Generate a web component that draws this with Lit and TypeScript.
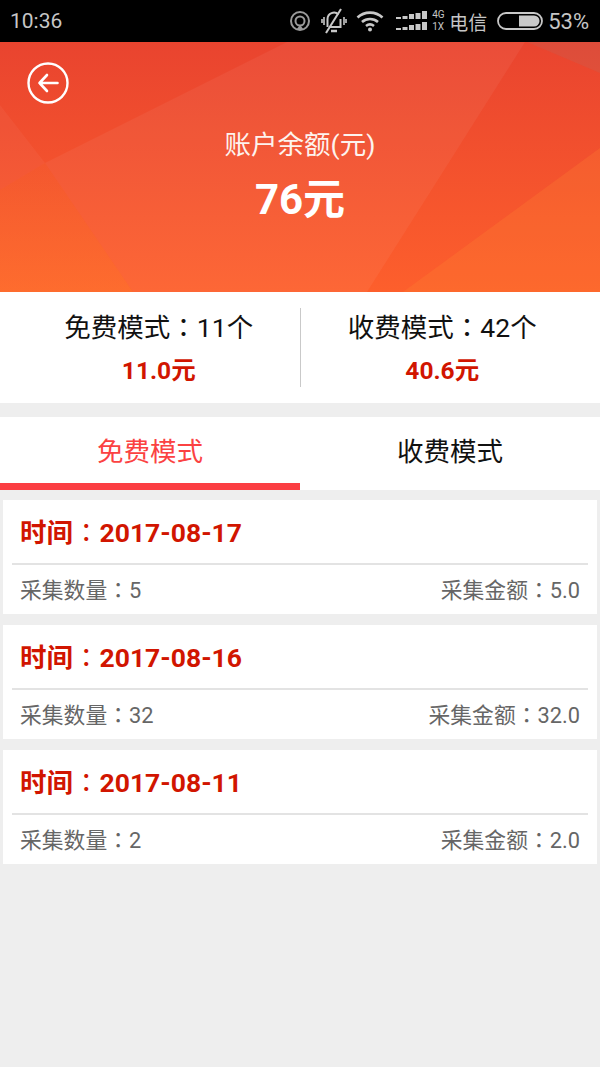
import { LitElement, html, css, svg } from "lit";
import { customElement } from "lit/decorators.js";

const records = [
  { date: "2017-08-17", count: "5", amount: "5.0" },
  { date: "2017-08-16", count: "32", amount: "32.0" },
  { date: "2017-08-11", count: "2", amount: "2.0" },
];

const signalRow = (y: number) =>
  [0, 1, 2, 3, 4].map((i) => {
    const h = [2, 3, 5, 6, 8][i];
    return svg`<rect x=${i * 6.5} y=${y + 8 - h} width="5" height=${h} fill="#c8c8c8"></rect>`;
  });

const colon = html`<span class="colon">：</span>`;

@customElement("app-root")
export class AppRoot extends LitElement {
  static styles = css`
    :host {
      display: block;
      width: 600px;
      height: 1067px;
      background: #eeeeee;
      font-family: Roboto, "Noto Sans CJK SC", sans-serif;
      overflow: hidden;
    }
    .colon { font-family: "Noto Sans CJK TC", sans-serif; font-weight: 400; line-height: 0; }
    .status {
      height: 42px;
      background: #000;
      color: #c6c6c6;
      display: flex;
      align-items: center;
      padding: 0 11px 0 10px;
      box-sizing: border-box;
      font-size: 21px;
    }
    .time { flex: 1; }
    .status-icons { display: flex; align-items: center; }
    .status-icons svg { display: block; flex: none; }
    .gap9 { margin-left: 9px; }
    .gap10 { margin-left: 10px; }
    .gap12 { margin-left: 12px; }
    .net {
      display: flex;
      flex-direction: column;
      font-size: 10px;
      line-height: 12px;
      width: 12px;
      margin: 0 5px 0 4px;
      text-align: center;
    }
    .carrier { font-size: 19px; margin-right: 10px; }
    .pct { margin-left: 5px; font-size: 22px; }
    .hero {
      position: relative;
      height: 250px;
      color: #fff;
      text-align: center;
      overflow: hidden;
    }
    .hero-bg { position: absolute; inset: 0; display: block; }
    .hero-body { position: relative; display: flex; flex-direction: column; align-items: center; padding-top: 85px; }
    .back { position: absolute; left: 27px; top: 20px; display: block; }
    .hero-label { font-size: 26.5px; line-height: 36px; color: #fdf3ee; }
    .hero-value { font-size: 42px; font-weight: 700; line-height: 50px; margin-top: 12px; }
    .stats {
      height: 111px;
      background: #fff;
      display: flex;
      padding: 16px 16px 16px 18px;
      box-sizing: border-box;
    }
    .stat {
      display: flex;
      flex-direction: column;
      align-items: center;
      justify-content: flex-start;
      gap: 6px;
    }
    .stat:first-child { flex: 282; }
    .stat + .stat { flex: 284; border-left: 1px solid #c9c9c9; }
    .stat-name { font-size: 26.5px; line-height: 40px; color: #111; }
    .stat-value { font-size: 24.5px; line-height: 34px; font-weight: 700; color: #d11500; }
    .tabs {
      margin-top: 14px;
      height: 73px;
      background: #fff;
      display: flex;
    }
    .tab {
      flex: 1;
      font-size: 26.5px;
      line-height: 69px;
      text-align: center;
      color: #111;
      box-sizing: border-box;
      height: 73px;
    }
    .tab.on { color: #fb4242; border-bottom: 7px solid #fb3e42; }
    .list {
      padding: 10px 3px 0;
      display: flex;
      flex-direction: column;
      gap: 11px;
    }
    .card { background: #fff; height: 114px; padding: 0 9px; box-sizing: border-box; }
    .card-title {
      line-height: 66px;
      padding: 0 8px;
      font-size: 26.5px;
      font-weight: 700;
      color: #d11500;
      border-bottom: 2px solid #e3e3e3;
      box-sizing: border-box;
      height: 65px;
      white-space: nowrap;
    }
    .card-row {
      display: flex;
      justify-content: space-between;
      padding: 0 8px;
      font-size: 21.8px;
      line-height: 52px;
      height: 49px;
      color: #666;
    }
  `;

  render() {
    return html`
      <div class="status">
        <div class="time">10:36</div>
        <div class="status-icons">
          <svg width="22" height="24" viewBox="0 0 22 24" fill="none" stroke="#9a9a9a" stroke-width="2">
            <circle cx="11" cy="12" r="9"></circle>
            <circle cx="11" cy="12" r="4.5"></circle>
            <path d="M7 21 L11 16 L15 21 Z" fill="#9a9a9a" stroke="none"></path>
          </svg>
          <svg class="gap10" width="26" height="26" viewBox="0 0 26 26" fill="none" stroke="#c8c8c8" stroke-width="2">
            <path d="M6.5 19 V11 a6.5 6.5 0 0 1 11 -4.5 M19.5 11 V19 H9"></path>
            <path d="M10 23 h6" stroke-width="2.5"></path>
            <path d="M20 1 L5 25"></path>
            <path d="M3 9 v8 M1 11 v4 M23 9 v8 M25 11 v4" stroke-width="1.6"></path>
          </svg>
          <svg class="gap9" width="28" height="22" viewBox="0 0 28 22" fill="none" stroke="#c8c8c8" stroke-width="2.6">
            <path d="M1.5 7.5 C8.5 1 19.5 1 26.5 7.5"></path>
            <path d="M6 12 C10.5 8 17.5 8 22 12"></path>
            <path d="M10 16 C12.5 14 15.5 14 18 16"></path>
            <circle cx="14" cy="19.5" r="2" fill="#c8c8c8" stroke="none"></circle>
          </svg>
          <svg class="gap12" width="32" height="20" viewBox="0 0 32 20">
            ${signalRow(0)}${signalRow(11)}
          </svg>
          <div class="net"><span>4G</span><span>1X</span></div>
          <div class="carrier">电信</div>
          <svg width="46" height="18" viewBox="0 0 46 18" fill="none">
            <rect x="1" y="1" width="44" height="16" rx="8" stroke="#c8c8c8" stroke-width="1.8"></rect>
            <path d="M22 3.5 H37 a5.5 5.5 0 0 1 0 11 H22 Z" fill="#c8c8c8"></path>
          </svg>
          <div class="pct">53%</div>
        </div>
      </div>

      <div class="hero">
        <svg class="hero-bg" width="600" height="250" viewBox="0 0 600 250">
          <defs>
            <linearGradient id="g" x1="0" y1="0" x2="0" y2="1">
              <stop offset="0" stop-color="#e9442f"></stop>
              <stop offset="1" stop-color="#fd5f2c"></stop>
            </linearGradient>
            <linearGradient id="o" gradientUnits="userSpaceOnUse" x1="0" y1="120" x2="0" y2="250">
              <stop offset="0" stop-color="#ff8a3a" stop-opacity=".1"></stop>
              <stop offset="1" stop-color="#ff8a33" stop-opacity=".3"></stop>
            </linearGradient>
          </defs>
          <rect width="600" height="250" fill="url(#g)"></rect>
          <polygon points="287,0 525,0 367,250 133,250 45,121" fill="#fff" opacity=".05"></polygon>
          <polygon points="0,63 45,121 0,148" fill="#fff" opacity=".04"></polygon>
          <polygon points="0,148 45,121 133,250 0,250" fill="url(#o)"></polygon>
          <polygon points="600,106 403,250 600,250" fill="#ff8a33" opacity=".24"></polygon>
          <polygon points="527,0 600,0 600,31" fill="#888" opacity=".12"></polygon>
        </svg>
        <svg class="back" width="42" height="42" viewBox="0 0 42 42" fill="none" stroke="#fff" stroke-linecap="round" stroke-linejoin="round">
          <circle cx="21" cy="21" r="19.5" stroke-width="2.4"></circle>
          <path d="M30.5 21 H12.5 M20 13 L12.5 21 L20 29" stroke-width="2.6"></path>
        </svg>
        <div class="hero-body">
          <div class="hero-label">账户余额(元)</div>
          <div class="hero-value">76元</div>
        </div>
      </div>

      <div class="stats">
        <div class="stat">
          <div class="stat-name">免费模式${colon}11个</div>
          <div class="stat-value">11.0元</div>
        </div>
        <div class="stat">
          <div class="stat-name">收费模式${colon}42个</div>
          <div class="stat-value">40.6元</div>
        </div>
      </div>

      <div class="tabs">
        <div class="tab on">免费模式</div>
        <div class="tab">收费模式</div>
      </div>

      <div class="list">
        ${records.map(
          (r) => html`
            <div class="card">
              <div class="card-title">时间${colon}${r.date}</div>
              <div class="card-row">
                <span>采集数量${colon}${r.count}</span>
                <span>采集金额${colon}${r.amount}</span>
              </div>
            </div>
          `
        )}
      </div>
    `;
  }
}
